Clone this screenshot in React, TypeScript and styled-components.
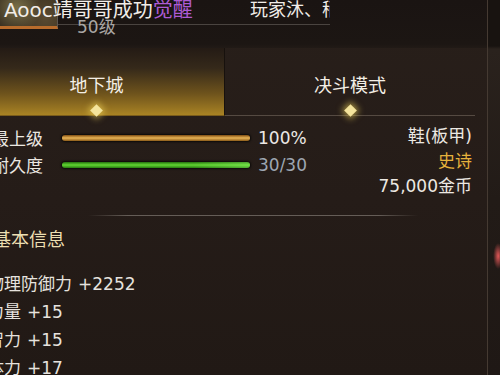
import React from "react";
import styled, { createGlobalStyle } from "styled-components";

const Global = createGlobalStyle`
  html, body { margin: 0; padding: 0; background: #231b17; }
  body {
    width: 500px; height: 375px; overflow: hidden;
    font-family: "DejaVu Sans", "Noto Sans CJK SC", sans-serif;
  }
  #root { width: 500px; height: 375px; }
`;

const Screen = styled.div`
  width: 500px;
  height: 375px;
  display: grid;
  grid-template-columns: 487px 13px;
  overflow: hidden;
  background: linear-gradient(180deg, #281f1a 0px, #251c18 200px, #211915 375px);
`;

const Main = styled.div`
  display: flex;
  flex-direction: column;
  min-width: 0;
  overflow: hidden;
`;

const Edge = styled.div`
  border-left: 1px solid #453a32;
  background:
    radial-gradient(ellipse 5px 13px at 85% 256px, rgba(235, 90, 90, 0.95), rgba(200, 60, 60, 0) 100%),
    linear-gradient(180deg, #181310 0px, #181310 46px, #2a221d 49px, #221b17 200px, #1f1815 375px);
`;

const Header = styled.header`
  position: relative;
  height: 48px;
  flex-shrink: 0;
  background: linear-gradient(180deg, #1a1412 0px, #1c1613 44px, #211a16 48px);
`;

const Avatar = styled.div`
  position: absolute;
  left: 0;
  top: 0;
  width: 57px;
  height: 26px;
  border-right: 1px solid #5d5650;
  border-bottom: 3px solid #b86c2c;
  background:
    radial-gradient(circle at 30% 30%, #7a7048 0%, rgba(90, 80, 50, 0) 55%),
    radial-gradient(circle at 80% 70%, #5a4a30 0%, rgba(60, 50, 30, 0) 60%),
    #3a3122;
`;

const TitleRow = styled.div`
  position: relative;
  width: 330px;
  height: 20px;
  overflow: hidden;
  white-space: nowrap;
  display: grid;
  grid-template-columns: 250px auto;
  line-height: 20px;
  color: #f1ede8;
`;

const Name = styled.span`
  padding-left: 4px;
  font-size: 20px;
`;

const Awaken = styled.span`
  color: #ad5bd4;
`;

const Player = styled.span`
  font-size: 18px;
`;

const Rule = styled.div`
  margin: 4px 0 0 58px;
  width: 272px;
  height: 1px;
  background: #4a4440;
`;

const Level = styled.div`
  position: relative;
  margin-top: -5px;
  padding-left: 77px;
  font-size: 17px;
  line-height: 14px;
  color: #aaa7a4;
`;

const Tabs = styled.nav`
  display: grid;
  grid-template-columns: 256px 250px;
  height: 63px;
  margin-left: -31px;
  flex-shrink: 0;
`;

const Tab = styled.div<{ $active?: boolean }>`
  display: flex;
  flex-direction: column;
  align-items: center;
  box-sizing: border-box;
  padding-top: 27px;
  font-size: 18px;
  line-height: 22px;
  color: #f4efe6;
  background: ${(p) =>
    p.$active
      ? "linear-gradient(180deg, #241b15 0%, #35291a 30%, #6e531c 68%, #a98324 100%)"
      : "transparent"};
  border-right: ${(p) => (p.$active ? "1px solid #17110d" : "none")};
  border-bottom: 1px solid ${(p) => (p.$active ? "#7a5c1c" : "#554a42")};
`;

const Diamond = styled.span`
  display: block;
  width: 9px;
  height: 9px;
  margin-top: 9px;
  transform: rotate(45deg);
  background: #f4e49c;
  box-shadow: 0 0 6px 2px rgba(240, 212, 90, 0.6);
`;

const Overview = styled.section`
  display: flex;
  justify-content: space-between;
  padding: 13px 15px 0 0;
  margin-left: -8px;
  flex-shrink: 0;
`;

const Meters = styled.div`
  display: flex;
  flex-direction: column;
`;

const MeterRow = styled.div`
  display: grid;
  grid-template-columns: 70px 188px auto;
  align-items: center;
  height: 27px;
`;

const MeterLabel = styled.span`
  font-size: 17px;
  color: #ebe7e1;
`;

const Bar = styled.div<{ $kind: "gold" | "green" }>`
  height: 6px;
  border-radius: 3px;
  box-shadow: 0 0 2px 1px rgba(0, 0, 0, 0.7);
  background: ${(p) =>
    p.$kind === "gold"
      ? "linear-gradient(180deg, #7e4c12 0%, #e9b456 50%, #8a5a18 100%)"
      : "linear-gradient(90deg, rgba(0,0,0,0) 70%, rgba(150,255,110,0.35) 100%), linear-gradient(180deg, #23700e 0%, #62d632 50%, #267a10 100%)"};
`;

const MeterValue = styled.span<{ $muted?: boolean }>`
  padding-left: 8px;
  font-size: 17px;
  color: ${(p) => (p.$muted ? "#9ea7b2" : "#ece8e4")};
`;

const ItemInfo = styled.div`
  display: flex;
  flex-direction: column;
  align-items: flex-end;
`;

const InfoLine = styled.span<{ $tone?: "epic" }>`
  font-size: 17px;
  line-height: 25px;
  color: ${(p) => (p.$tone === "epic" ? "#e6b23c" : "#ece8e2")};
`;

const Divider = styled.div`
  margin: 16px 0 0 88px;
  width: 330px;
  height: 1px;
  flex-shrink: 0;
  background: linear-gradient(90deg, rgba(100, 92, 86, 0) 0%, #655d57 12%, #655d57 88%, rgba(100, 92, 86, 0) 100%);
`;

const Heading = styled.h3`
  margin: 12px 0 0 -7px;
  font-size: 18px;
  font-weight: normal;
  line-height: 24px;
  color: #eddfb2;
`;

const StatList = styled.ul`
  list-style: none;
  margin: 18px 0 0 -13px;
  padding: 0;
`;

const Stat = styled.li`
  display: flex;
  gap: 6px;
  font-size: 17px;
  line-height: 28px;
  color: #e6e2de;
  white-space: nowrap;
`;

const stats = [
  { name: "物理防御力", value: "+2252" },
  { name: "力量", value: "+15" },
  { name: "智力", value: "+15" },
  { name: "体力", value: "+17" },
];

export default function App() {
  return (
    <>
      <Global />
      <Screen>
        <Main>
          <Header>
            <Avatar />
            <TitleRow>
              <Name>
                Aooc靖哥哥成功<Awaken>觉醒</Awaken>
              </Name>
              <Player>玩家沐、稍</Player>
            </TitleRow>
            <Rule />
            <Level>50级</Level>
          </Header>

          <Tabs>
            <Tab $active>
              地下城
              <Diamond />
            </Tab>
            <Tab>
              决斗模式
              <Diamond />
            </Tab>
          </Tabs>

          <Overview>
            <Meters>
              <MeterRow>
                <MeterLabel>最上级</MeterLabel>
                <Bar $kind="gold" />
                <MeterValue>100%</MeterValue>
              </MeterRow>
              <MeterRow>
                <MeterLabel>耐久度</MeterLabel>
                <Bar $kind="green" />
                <MeterValue $muted>30/30</MeterValue>
              </MeterRow>
            </Meters>
            <ItemInfo>
              <InfoLine>鞋(板甲)</InfoLine>
              <InfoLine $tone="epic">史诗</InfoLine>
              <InfoLine>75,000金币</InfoLine>
            </ItemInfo>
          </Overview>

          <Divider />
          <Heading>基本信息</Heading>
          <StatList>
            {stats.map((s) => (
              <Stat key={s.name}>
                <span>{s.name}</span>
                <span>{s.value}</span>
              </Stat>
            ))}
          </StatList>
        </Main>
        <Edge />
      </Screen>
    </>
  );
}
